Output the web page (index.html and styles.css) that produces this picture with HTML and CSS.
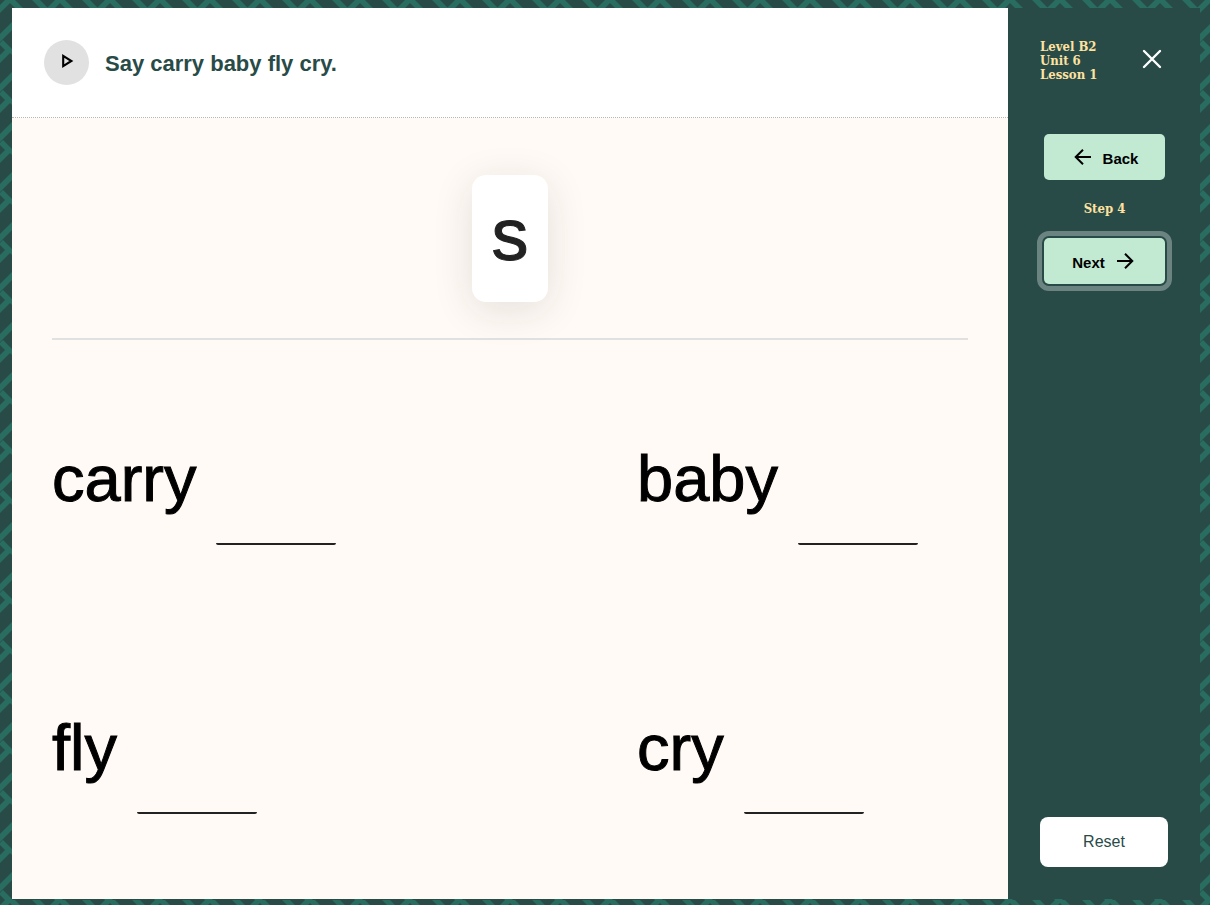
FILE: index.html
```html
<!DOCTYPE html>
<html lang="en">
<head>
<meta charset="utf-8">
<meta name="viewport" content="width=device-width, initial-scale=1">
<title>Say carry baby fly cry.</title>
<link rel="stylesheet" href="styles.css">
</head>
<body>
<div class="lesson">
  <main class="stage">
    <header class="prompt">
      <button class="play" type="button" aria-label="Play instruction">
        <svg width="14" height="16" viewBox="0 0 14 16"><path d="M3.2 2.8V13.2L11.4 8Z" fill="none" stroke="#000" stroke-width="2.1"/></svg>
      </button>
      <h1 class="title">Say carry baby fly cry.</h1>
    </header>
    <section class="bank">
      <button class="tile" type="button">s</button>
    </section>
    <section class="words">
      <div class="item"><span class="word">carry</span><span class="blank"></span></div>
      <div class="item"><span class="word">baby</span><span class="blank"></span></div>
      <div class="item"><span class="word">fly</span><span class="blank"></span></div>
      <div class="item"><span class="word">cry</span><span class="blank"></span></div>
    </section>
  </main>
  <aside class="side">
    <div class="side-head">
      <div class="crumbs"><div>Level B2</div><div>Unit 6</div><div>Lesson 1</div></div>
      <button class="close" type="button" aria-label="Close">
        <svg width="20" height="20" viewBox="0 0 20 20"><path d="M2 2L18 18M18 2L2 18" fill="none" stroke="#fff" stroke-width="2.4" stroke-linecap="round"/></svg>
      </button>
    </div>
    <nav class="steps">
      <button class="nav-button" type="button">
        <svg width="24" height="24" viewBox="0 0 24 24"><path d="M20 12H5M12 4.7L4.7 12L12 19.3" fill="none" stroke="#000" stroke-width="2"/></svg>
        <span class="nav-label">Back</span>
      </button>
      <div class="step">Step 4</div>
      <button class="nav-button current" type="button">
        <span class="nav-label">Next</span>
        <svg width="24" height="24" viewBox="0 0 24 24"><path d="M4 12H19M12 4.7L19.3 12L12 19.3" fill="none" stroke="#000" stroke-width="2"/></svg>
      </button>
    </nav>
    <button class="reset" type="button">Reset</button>
  </aside>
</div>
</body>
</html>
```
FILE: styles.css
```css
* { box-sizing: border-box; }

body {
  margin: 0;
  font-family: "Liberation Sans", Arial, sans-serif;
  background: #284b48 url("data:image/svg+xml,%3Csvg xmlns='http://www.w3.org/2000/svg' width='50' height='50'%3E%3Cg fill='none' stroke='%23296d60' stroke-width='5.6'%3E%3Cpath d='M-4 13L10 -1L24 13M1 42L10 51L24 65M10 50L-4 64M18 20L-2 40M33 -3L48 12M46 13L60 -1'/%3E%3C/g%3E%3C/svg%3E") 0 0 / 50px 50px;
}

button {
  padding: 0;
  border: 0;
  font: inherit;
  cursor: pointer;
}

svg { display: block; }

.lesson {
  display: flex;
  min-height: 100vh;
  padding: 8px 10px 6px 12px;
}

.stage {
  flex: 1;
  display: flex;
  flex-direction: column;
  background: #fffaf5;
}

.prompt {
  display: flex;
  align-items: center;
  gap: 16px;
  padding: 32px;
  background: #fff;
  border-bottom: 1px dotted #b9b5b2;
}

.play {
  display: flex;
  align-items: center;
  justify-content: center;
  width: 45px;
  height: 45px;
  padding-bottom: 3px;
  border-radius: 50%;
  background: #e1e1e1;
}

.title {
  margin: 0;
  padding-top: 2px;
  font-size: 22px;
  font-weight: 700;
  line-height: 28px;
  color: #284b48;
}

.bank {
  display: flex;
  justify-content: center;
  margin: 0 40px;
  padding: 57px 0 36px;
  border-bottom: 2px solid #e1e1e1;
}

.tile {
  width: 76px;
  height: 127px;
  padding-bottom: 8px;
  border-radius: 14px;
  background: #fff;
  box-shadow: 0 8px 40px rgba(40, 36, 30, 0.12);
  color: #222;
  font-size: 74px;
  -webkit-text-stroke: 1px #222;
}

.words {
  flex: 1;
  display: grid;
  grid-template-columns: 585fr 331fr;
  grid-template-rows: 1fr 1fr;
  padding: 0 40px 21px;
}

.item {
  display: flex;
  align-items: center;
  gap: 20px;
}

.word {
  padding-top: 8px;
  font-size: 65px;
  line-height: 72px;
  color: #000;
  -webkit-text-stroke: 1px #000;
}

.blank {
  width: 120px;
  height: 141px;
  border-bottom: 2px solid #222;
  border-radius: 2px;
}

.side {
  display: flex;
  flex-direction: column;
  width: 192px;
  padding: 32px;
  background: #284b48;
}

.side-head {
  display: flex;
  justify-content: space-between;
}

.crumbs, .step {
  font-family: "DejaVu Serif Condensed", "DejaVu Serif", "Liberation Serif", serif;
  font-weight: 700;
  font-stretch: condensed;
  font-size: 13px;
  line-height: 14px;
  color: #ffe2a0;
}

.close {
  align-self: flex-start;
  margin: 9px 6px 0 0;
  background: none;
}

.steps {
  display: flex;
  flex-direction: column;
  align-items: stretch;
  margin: 52px 3px 0 4px;
}

.nav-button {
  display: flex;
  align-items: center;
  justify-content: center;
  gap: 8px;
  height: 46px;
  border-radius: 5px;
  background: #c2ead3;
  color: #000;
  font-size: 15px;
  font-weight: 700;
}

.nav-label {
  padding-top: 2px;
}

.step {
  padding: 22px 0;
  text-align: center;
}

.current {
  outline: 5px solid #6b8481;
  outline-offset: 2px;
}

.reset {
  height: 50px;
  margin-top: auto;
  border-radius: 8px;
  background: #fff;
  color: #284b48;
  font-size: 16px;
}
```
